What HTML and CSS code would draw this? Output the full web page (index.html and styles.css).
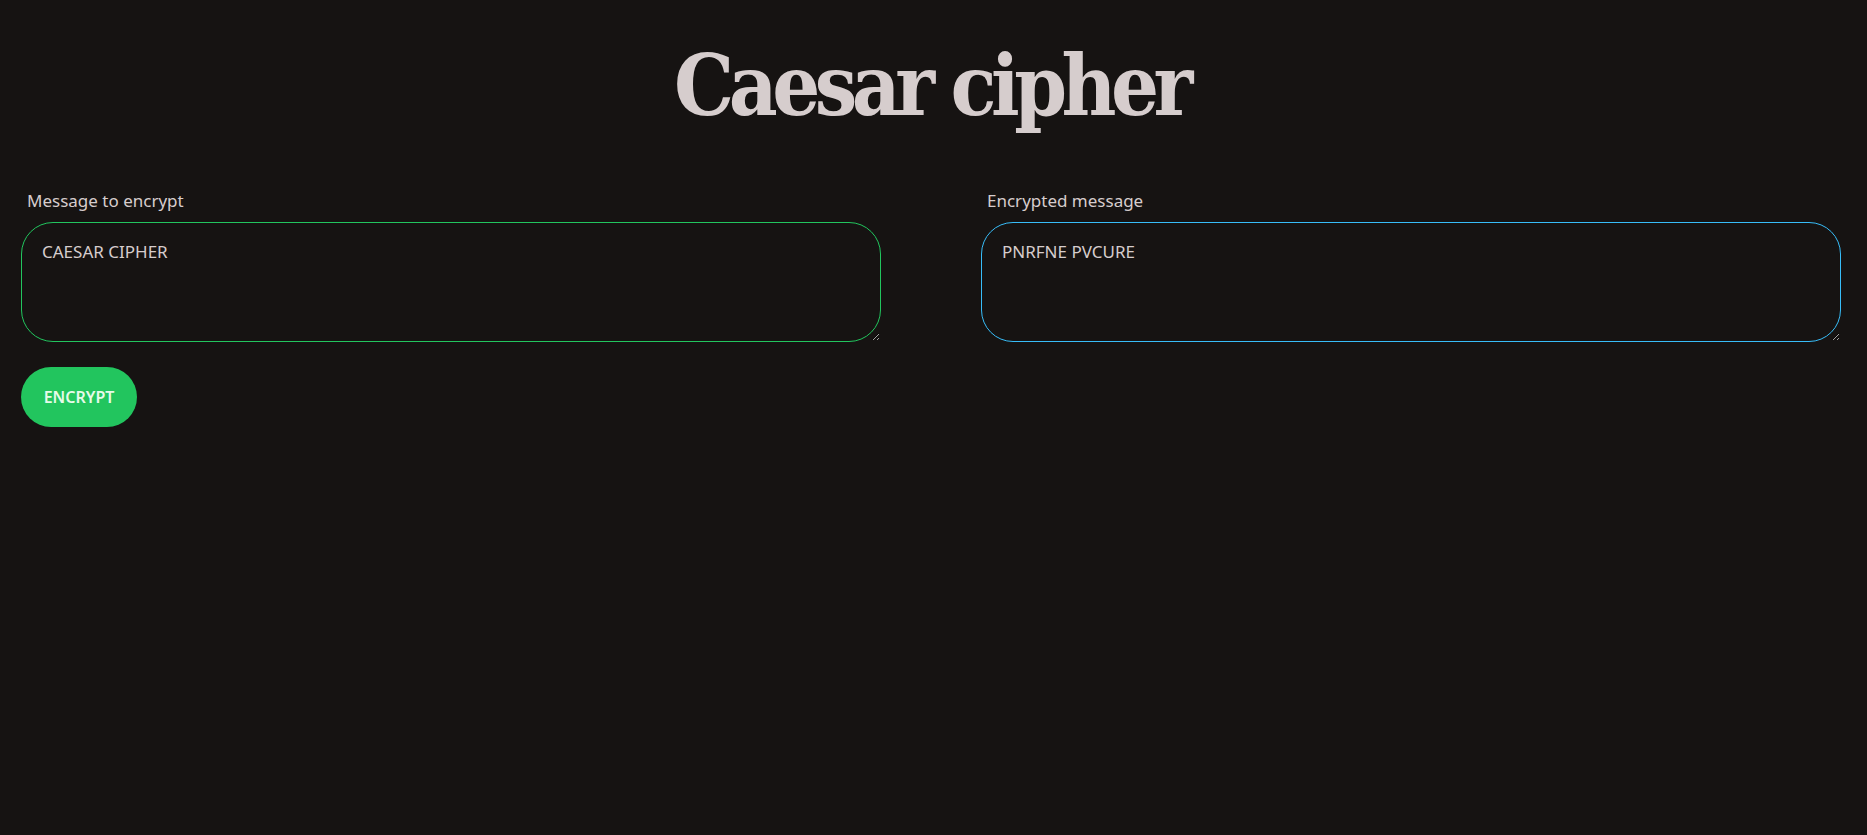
FILE: index.html
```html
<!DOCTYPE html>
<html lang="en">
<head>
<meta charset="utf-8">
<title>Caesar cipher</title>
<link rel="stylesheet" href="styles.css">
</head>
<body>
<main class="app">
  <h1 class="title">Caesar cipher</h1>
  <div class="panels">
    <div class="panel">
      <label class="label" for="plain">Message to encrypt</label>
      <textarea id="plain" class="box box-green">CAESAR CIPHER</textarea>
      <div class="actions"><button class="btn">ENCRYPT</button></div>
    </div>
    <div class="panel">
      <label class="label" for="cipher">Encrypted message</label>
      <textarea id="cipher" class="box box-blue">PNRFNE PVCURE</textarea>
    </div>
  </div>
</main>
</body>
</html>
```
FILE: styles.css
```css
html, body {
  margin: 0;
  padding: 0;
  background: #161312;
  height: 100%;
}
body {
  font-family: "Noto Sans", "Open Sans", sans-serif;
  color: #d6cdcd;
}
.app {
  padding: 0 26px 0 21px;
}
.title {
  margin: 0;
  padding-top: 44px;
  height: 120px;
  box-sizing: border-box;
  text-align: center;
  font-family: "DejaVu Serif Condensed", "DejaVu Serif", serif;
  font-stretch: condensed;
  font-weight: bold;
  font-size: 84px;
  line-height: 1;
  color: #d6cdcd;
  letter-spacing: -5.5px;
}
.panels {
  display: grid;
  grid-template-columns: 860px 860px;
  column-gap: 100px;
  margin-top: 69px;
}
.panel {
  display: flex;
  flex-direction: column;
}
.label {
  font-size: 17px;
  line-height: 24px;
  padding-left: 6px;
  margin-bottom: 9px;
  color: #d6cdcd;
}
.box {
  box-sizing: border-box;
  width: 860px;
  height: 120px;
  background: #161312;
  color: #d6cdcd;
  border-radius: 32px;
  padding: 17px 20px 16px;
  font-family: "Noto Sans", "Open Sans", sans-serif;
  font-size: 17px;
  line-height: 24px;
  outline: none;
}
.box-green { border: 1px solid #22c55e; }
.box-blue { border: 1px solid #38bdf8; }
.actions {
  margin-top: 25px;
}
.btn {
  height: 60px;
  width: 116px;
  border: none;
  border-radius: 30px;
  background: #22c55e;
  color: #e6fbe9;
  font-family: "Noto Sans", "Open Sans", sans-serif;
  font-size: 16px;
  font-weight: 600;
  cursor: pointer;
}
```
